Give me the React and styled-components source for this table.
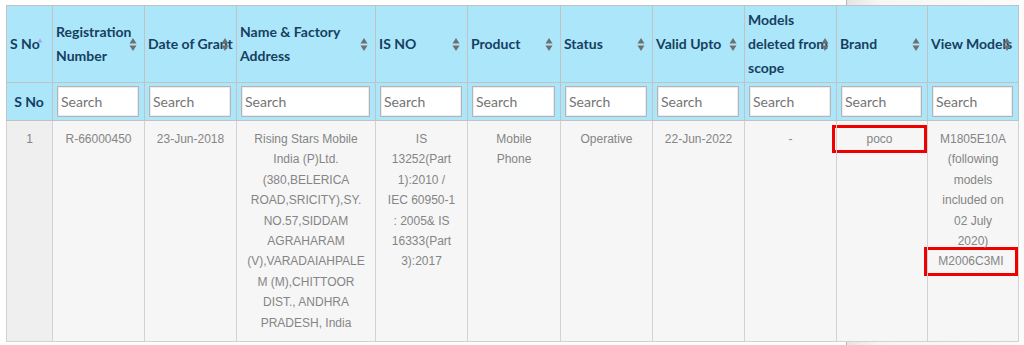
import React from 'react'
import styled, { createGlobalStyle } from 'styled-components'

const GlobalStyle = createGlobalStyle`
  html, body {
    margin: 0;
    padding: 0;
  }

  body {
    background: linear-gradient(
      to right,
      #ffffff 846px,
      #b4b4b4 846px,
      #b4b4b4 847px,
      #e4e4e4 847px,
      #f6f6f6 880px,
      #fbfbfb 1024px
    );
    font-family: Lato, 'Liberation Sans', sans-serif;
  }
`

const Page = styled.div`
  padding: 5px 6px 0;
`

const Table = styled.table`
  width: 1013px;
  table-layout: fixed;
  border-collapse: collapse;
  border: 1px solid #c8c8c8;
`

const HeadCell = styled.th`
  position: relative;
  padding: 2px 3px;
  background-color: #abe6fb;
  border: 1px solid #c2c2c2;
  color: #173f5f;
  font-family: Lato, 'Liberation Sans', sans-serif;
  font-size: 14px;
  font-weight: 700;
  line-height: 24px;
  text-align: left;
  vertical-align: middle;
`

const SortIcon = styled.svg`
  position: absolute;
  top: 50%;
  right: 7px;
  width: 8px;
  height: 15px;
  margin-top: -7px;
`

const FilterCell = styled.th`
  height: 30px;
  padding: 3px 5px 3px 4px;
  background-color: #abe6fb;
  border: 1px solid #c2c2c2;
  color: #173f5f;
  font-family: Lato, 'Liberation Sans', sans-serif;
  font-size: 14px;
  font-weight: 700;
  text-align: center;
  vertical-align: middle;
`

const SearchInput = styled.input`
  display: block;
  box-sizing: border-box;
  width: 100%;
  height: 31px;
  padding: 0 3px;
  border: 1px solid #b4b4b4;
  box-shadow: inset 0 0 0 1px #ececec;
  background: #fff;
  font-family: Lato, 'Liberation Sans', sans-serif;
  font-size: 14px;
  color: #555;

  &::placeholder {
    color: #747474;
  }

  &:focus {
    outline: none;
  }
`

const BodyCell = styled.td`
  padding: 8px ${({ $inset }) => $inset || 10}px;
  background-color: ${({ $shade }) => ($shade ? '#efefef' : '#f6f6f6')};
  border: 1px solid #d2d2d2;
  color: #858585;
  font-family: 'Liberation Sans', Arial, sans-serif;
  font-size: 12px;
  line-height: 20.4px;
  text-align: center;
  vertical-align: top;
  overflow-wrap: anywhere;
`

const Highlight = styled.span`
  display: block;
  padding: 1px 0;
  margin: ${({ $edge }) => ($edge ? '-4px -10px -4px -14px' : '-4px -10px -4px -15px')};
  border: 3px solid #ee0000;
`

const columns = [
  { width: 46, label: 'S No', sort: 'asc' },
  { width: 92, label: 'Registration Number' },
  { width: 92, label: 'Date of Grant' },
  { width: 139, label: 'Name & Factory Address' },
  { width: 92, label: 'IS NO' },
  { width: 93, label: 'Product' },
  { width: 92, label: 'Status' },
  { width: 92, label: 'Valid Upto' },
  { width: 92, label: 'Models deleted from scope' },
  { width: 91, label: 'Brand' },
  { width: 91, label: 'View Models' },
]

function Sorter({ active }) {
  if (active) {
    return (
      <SortIcon viewBox='0 0 8 15' style={{ right: 8 }}>
        <path d='M1.5 5.5 L4 1.5 L6.5 5.5 Z' fill='#a5a2ee' />
      </SortIcon>
    )
  }
  return (
    <SortIcon viewBox='0 0 8 15'>
      <path d='M0.5 6.5 L4 1 L7.5 6.5 Z' fill='#707070' />
      <path d='M0.5 8.5 L4 14 L7.5 8.5 Z' fill='#707070' />
    </SortIcon>
  )
}

export default function App() {
  return (
    <Page>
      <GlobalStyle />
      <Table>
        <colgroup>
          {columns.map(col => (
            <col key={col.label} style={{ width: col.width }} />
          ))}
        </colgroup>
        <thead>
          <tr>
            {columns.map(col => (
              <HeadCell key={col.label}>
                {col.label}
                <Sorter active={col.sort === 'asc'} />
              </HeadCell>
            ))}
          </tr>
          <tr>
            <FilterCell>S No</FilterCell>
            {columns.slice(1).map(col => (
              <FilterCell key={col.label}>
                <SearchInput placeholder='Search' />
              </FilterCell>
            ))}
          </tr>
        </thead>
        <tbody>
          <tr>
            <BodyCell $shade>1</BodyCell>
            <BodyCell>R-66000450</BodyCell>
            <BodyCell>23-Jun-2018</BodyCell>
            <BodyCell>
              Rising Stars Mobile India (P)Ltd. (380,BELERICA
              ROAD,SRICITY),SY. NO.57,SIDDAM AGRAHARAM (V),VARADAIAHPALEM
              (M),CHITTOOR DIST., ANDHRA PRADESH, India
            </BodyCell>
            <BodyCell $inset={11}>
              IS 13252(Part 1):2010 / IEC 60950-1 : 2005&amp; IS 16333(Part
              3):2017
            </BodyCell>
            <BodyCell>Mobile Phone</BodyCell>
            <BodyCell>Operative</BodyCell>
            <BodyCell>22-Jun-2022</BodyCell>
            <BodyCell>-</BodyCell>
            <BodyCell>
              <Highlight>poco</Highlight>
            </BodyCell>
            <BodyCell>
              M1805E10A (following models included on 02 July 2020)
              <Highlight $edge>M2006C3MI</Highlight>
            </BodyCell>
          </tr>
        </tbody>
      </Table>
    </Page>
  )
}
